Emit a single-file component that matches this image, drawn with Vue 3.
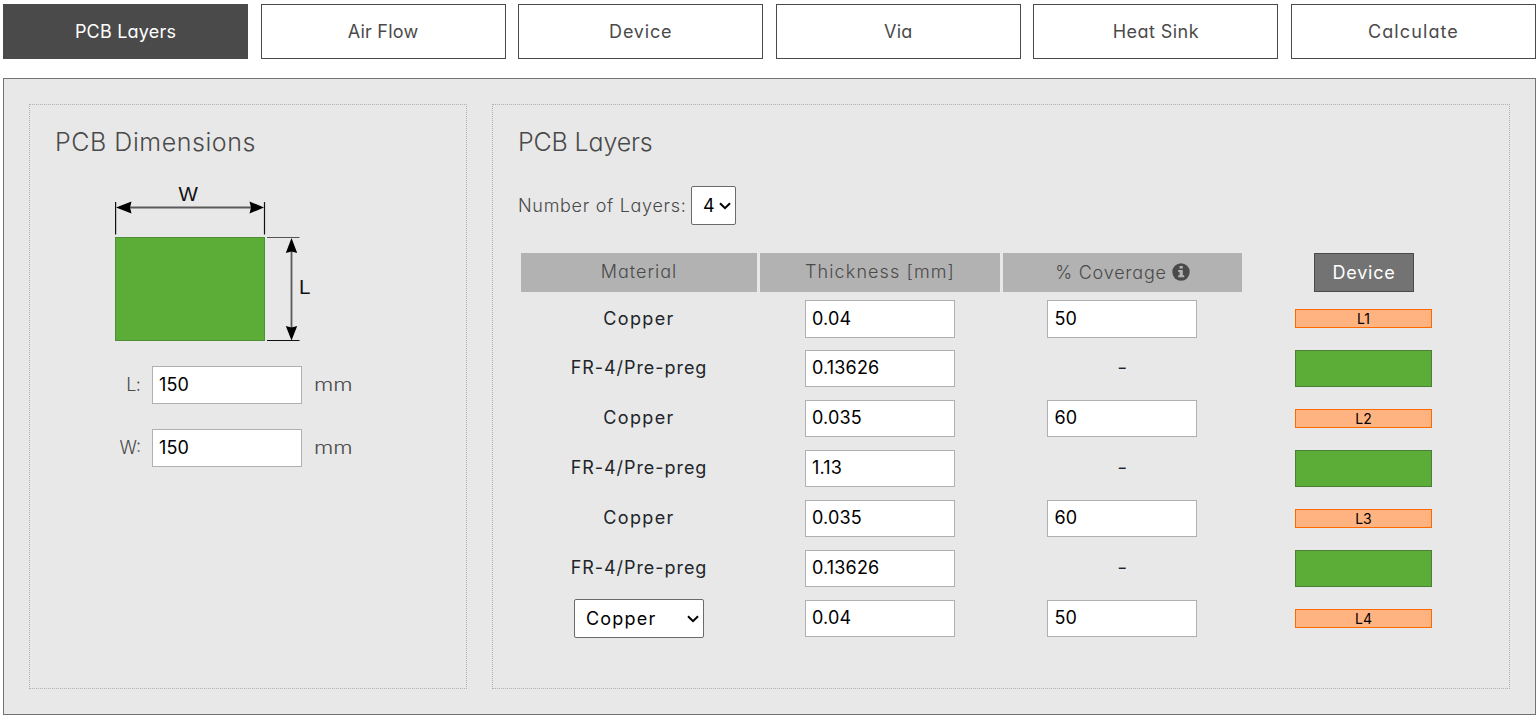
<script setup>
import { ref } from 'vue'

const tabs = ['PCB Layers', 'Air Flow', 'Device', 'Via', 'Heat Sink', 'Calculate']
const active = ref(0)
const dims = ref([
  { label: 'L:', value: '150' },
  { label: 'W:', value: '150' },
])
const rows = ref([
  { material: 'Copper', thickness: '0.04', coverage: '50', layer: 'L1' },
  { material: 'FR-4/Pre-preg', thickness: '0.13626' },
  { material: 'Copper', thickness: '0.035', coverage: '60', layer: 'L2' },
  { material: 'FR-4/Pre-preg', thickness: '1.13' },
  { material: 'Copper', thickness: '0.035', coverage: '60', layer: 'L3' },
  { material: 'FR-4/Pre-preg', thickness: '0.13626' },
  { material: 'Copper', thickness: '0.04', coverage: '50', layer: 'L4', editable: true },
])
const layerCount = ref('4')
</script>

<template>
  <div class="page">
    <nav class="tabs">
      <button v-for="(t, i) in tabs" :key="t" class="tab" :class="{ active: i === active }" @click="active = i">{{ t }}</button>
    </nav>

    <main class="panel">
      <section class="card dimensions">
        <h2>PCB Dimensions</h2>
        <svg class="diagram" width="210" height="164" viewBox="0 0 210 164">
          <g transform="translate(0 2)">
            <rect x="10.5" y="53.5" width="149" height="103" fill="#5cac38" stroke="#4f8f35" />
            <g stroke="#111" stroke-width="1.2">
              <path d="M10.6 18v32.500M159.500 18v32.500" />
              <path d="M162 53.500h32.500" stroke="#555" />
              <path d="M162 156.500h32.500" />
            </g>
            <g stroke="#5a5a5a" stroke-width="1.8">
              <path d="M20 23.500h130M186.500 62v88" />
            </g>
            <g fill="#000">
              <path d="M11 23.500 26.500 17.500 25 23.500 26.500 29.500z" />
              <path d="M159 23.500 144.500 17.500 146 23.500 144.500 29.500z" />
              <path d="M186.500 54 180.800 69 186.500 67.500 192.200 69z" />
              <path d="M186.500 156.500 180.800 142 186.500 143.500 192.200 142z" />
            </g>
          </g>
          <text x="83.300" y="19" text-anchor="middle" class="mark">W</text>
          <text x="194" y="112" class="mark">L</text>
        </svg>
        <div v-for="d in dims" :key="d.label" class="dim-row">
          <label>{{ d.label }}</label>
          <input v-model="d.value" class="field" />
          <span class="unit">mm</span>
        </div>
      </section>

      <section class="card layers">
        <h2>PCB Layers</h2>
        <div class="count">
          <span class="count-label">Number of Layers:</span>
          <div class="select small">
            <select v-model="layerCount"><option>4</option></select>
            <svg width="12" height="8" viewBox="0 0 12 8"><path d="M1 1.200 6 6.200 11 1.200" fill="none" stroke="#000" stroke-width="2" /></svg>
          </div>
        </div>
        <div class="grid head">
          <div class="th t-mat">Material</div>
          <div class="th t-thick">Thickness [mm]</div>
          <div class="th t-cov">
            <span>% Coverage</span>
            <svg width="18" height="18" viewBox="0 0 18 18">
              <circle cx="9" cy="9" r="8.700" fill="#4a4a4a" />
              <path d="M7.500 3h3.300v2.600H7.500zM6.200 7h4.600v5.300h1.400v2H6.200v-2h1.400V9H6.200z" fill="#b2b2b2" />
            </svg>
          </div>
          <div class="cell"><div class="device">Device</div></div>
        </div>
        <div v-for="(r, i) in rows" :key="i" class="grid row" :class="{ first: i === 0 }">
          <div class="cell material">
            <div v-if="r.editable" class="select wide">
              <select v-model="r.material"><option>Copper</option></select>
              <svg width="12" height="8" viewBox="0 0 12 8"><path d="M1 1.200 6 6.200 11 1.200" fill="none" stroke="#000" stroke-width="2" /></svg>
            </div>
            <span v-else :class="r.layer ? 'copper' : 'prepreg'">{{ r.material }}</span>
          </div>
          <div class="cell"><input v-model="r.thickness" class="field" /></div>
          <div class="cell coverage">
            <input v-if="r.coverage" v-model="r.coverage" class="field" />
            <span v-else class="dash">-</span>
          </div>
          <div class="cell">
            <div v-if="r.layer" class="bar copper-bar">{{ r.layer }}</div>
            <div v-else class="bar core-bar"></div>
          </div>
        </div>
      </section>
    </main>
  </div>
</template>

<style>
body { background: #fff; }
</style>

<style scoped>
* { box-sizing: border-box; }
.page {
  width: 1537px;
  height: 717px;
  padding: 4px 1px 0 3px;
  font-family: Inter, "Noto Sans", sans-serif;
  font-size: 18px;
  font-feature-settings: "cv11";
  color: #4a4a4a;
  overflow: hidden;
}
button, input, select { font: inherit; font-feature-settings: inherit; letter-spacing: inherit; margin: 0; }
.tabs { display: grid; grid-template-columns: repeat(6, 245px); justify-content: space-between; }
.tab { height: 55px; padding: 0 0 1px; border: 1px solid #4a4a4a; border-radius: 0; background: #fff; color: #4a4a4a; letter-spacing: 0.2px; }
.tab:nth-child(3) { letter-spacing: 0.8px; }
.tab:nth-child(5) { letter-spacing: 0.45px; }
.tab:nth-child(6) { letter-spacing: 1.1px; }
.tab.active { background: #4a4a4a; color: #fff; }
.panel {
  display: flex;
  gap: 25px;
  height: 637px;
  margin-top: 19px;
  padding: 25px;
  border: 1px solid #737373;
  background: #e8e8e8;
}
.card { height: 585px; border: 1px dotted #b0b0b0; padding: 19px 25px 20px; }
.dimensions { width: 438px; }
.layers { width: 1018px; }
h2 { margin: 0; height: 36px; line-height: 36px; font-size: 25px; font-weight: 350; white-space: nowrap; }
.dimensions h2 { letter-spacing: 0.55px; }
.layers h2 { letter-spacing: -0.15px; }
.diagram { display: block; margin: 22px 0 0 50px; }
.mark { font-family: "Liberation Sans", sans-serif; font-size: 20.500px; fill: #111; }
.dim-row { display: flex; align-items: center; height: 38px; margin-bottom: 25px; font-weight: 350; }
.diagram + .dim-row { margin-top: 20px; }
.dim-row label { width: 86px; margin-right: 11px; padding-bottom: 2px; text-align: right; }
.dim-row:nth-of-type(1) label { letter-spacing: -0.8px; padding-right: 1px; }
.unit { margin-left: 12px; padding-bottom: 2px; transform: scaleX(1.23); transform-origin: left; }
.field {
  width: 150px;
  height: 38px;
  padding: 0 6px 2px;
  border: 1px solid #b0b0b0;
  border-radius: 0;
  background: #fff;
  color: #000;
  font-weight: 400;
  letter-spacing: 0.15px;
}
.count { display: flex; align-items: center; height: 39px; margin-top: 26px; font-weight: 350; }
.count-label { width: 173px; white-space: nowrap; letter-spacing: 0.7px; }
.select { position: relative; }
.select select {
  appearance: none;
  width: 100%;
  height: 39px;
  padding: 0 0 0 11px;
  border: 1px solid #6b6b6b;
  border-radius: 2px;
  background: #fff;
  color: #000;
  font-weight: 400;
}
.select svg { position: absolute; right: 5px; top: 16px; }
.small { width: 45px; }
.wide { width: 130px; margin-bottom: 1px; letter-spacing: 1.2px; }
.grid { display: grid; grid-template-columns: 236px 240px 239px 237px; column-gap: 3px; margin-left: 3px; }
.head { height: 39px; margin-top: 28px; margin-bottom: 2px; }
.th { display: flex; align-items: center; justify-content: center; padding-bottom: 2px; background: #b2b2b2; font-weight: 350; }
.t-mat { letter-spacing: 1px; }
.t-thick { letter-spacing: 1.1px; }
.t-cov { gap: 5px; padding-bottom: 1px; letter-spacing: 0.8px; }
.row { height: 50px; }
.cell { display: flex; align-items: center; justify-content: center; }
.row:not(.first) .field { height: 37px; margin-bottom: 1px; }
.coverage { padding-right: 2px; }
.coverage .field { padding-left: 7px; }
.material { color: #212529; }
.copper, .prepreg, .dash { padding-bottom: 4px; }
.first .copper { padding-bottom: 2px; }
.copper { letter-spacing: 1.35px; }
.prepreg { letter-spacing: 0.95px; }
.dash { padding-left: 1px; color: #212529; transform: scaleX(1.2); }
.device { width: 100px; height: 39px; margin-left: 1px; line-height: 37px; text-align: center; letter-spacing: 0.8px; border: 1px solid #4a4a4a; background: #737373; color: #fff; }
.bar { width: 137px; border: 1px solid; }
.copper-bar { height: 19px; margin-bottom: 1px; line-height: 18px; text-align: center; font-size: 14px; border-color: #ff6a00; background: #ffb380; color: #000; }
.core-bar { height: 37px; margin-bottom: 1px; border-color: #4a8036; background: #5cac38; }
</style>
